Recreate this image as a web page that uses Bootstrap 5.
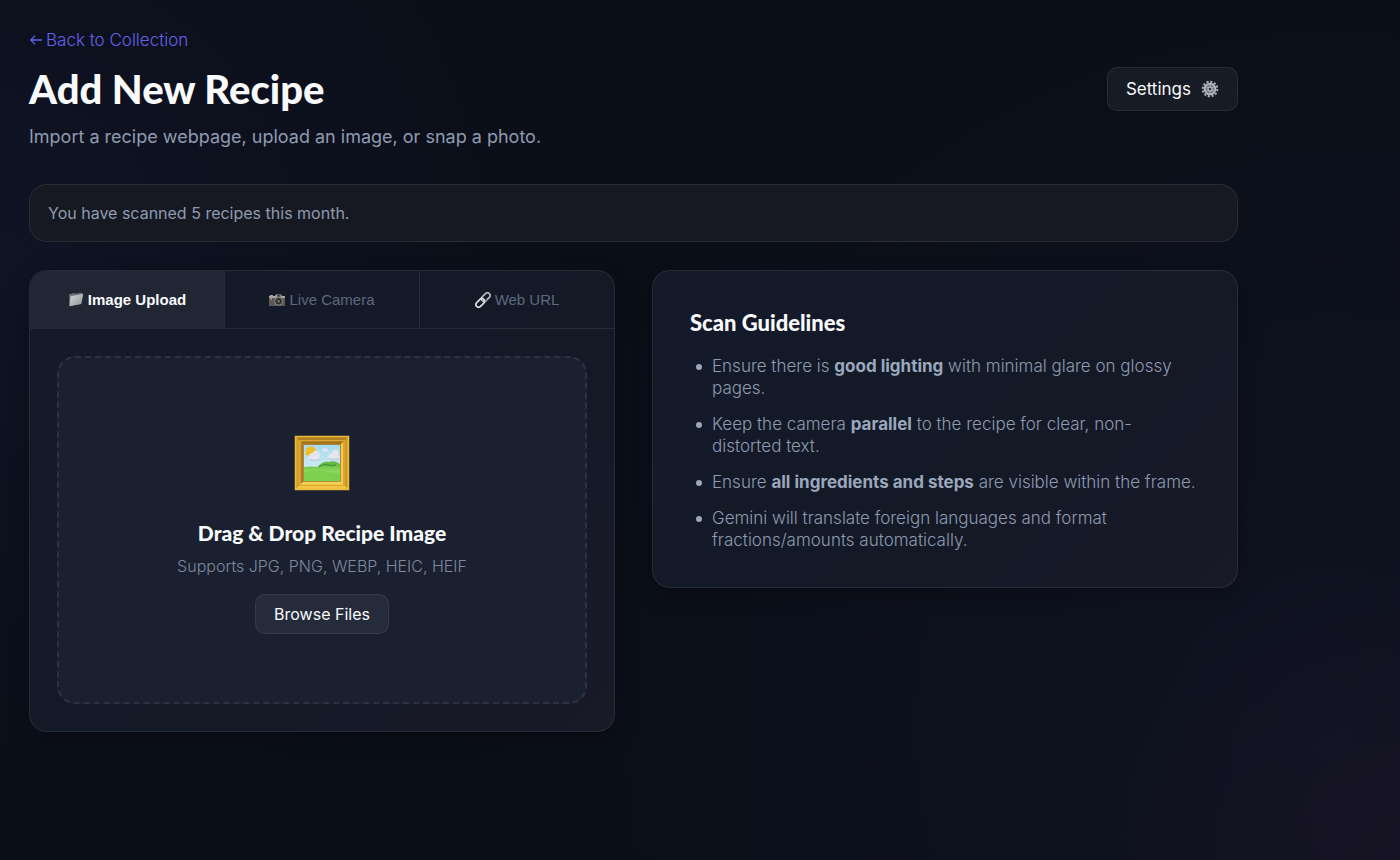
<!DOCTYPE html>
<html lang="en" data-bs-theme="dark">
<head>
<meta charset="utf-8">
<meta name="viewport" content="width=device-width, initial-scale=1">
<title>Add New Recipe</title>
<link href="https://cdn.jsdelivr.net/npm/bootstrap@5.3.0/dist/css/bootstrap.min.css" rel="stylesheet">
<style>
  :root {
    --ink: #f8fafc;
    --muted: #8f9bb0;
    --line: rgba(255, 255, 255, .08);
  }
  body {
    min-height: 100vh;
    font-family: "Inter", sans-serif;
    font-size: 17px;
    line-height: 22px;
    color: var(--muted);
    background:
      radial-gradient(circle at 100% 100%, rgba(236, 72, 153, .04), transparent 18%),
      radial-gradient(circle at 0 30%, rgba(99, 102, 241, .06), transparent 40%),
      radial-gradient(circle at 95% 85%, rgba(99, 92, 200, .06), transparent 60%),
      #0a0e17;
    background-attachment: fixed;
  }
  .page { max-width: 1267px; padding: 28px 29px; }
  .back-link { color: #6361e8; font-size: 17px; line-height: 24px; font-weight: 300; width: fit-content; }
  h1, h2, h3 { color: var(--ink); font-family: "Lato", sans-serif; margin: 0; }
  h1 { font-size: 40px; line-height: 48px; font-weight: 900; margin-top: 13px; }
  h2 { font-size: 22px; line-height: 28px; font-weight: 900; }
  h3 { font-size: 21px; line-height: 28px; font-weight: 900; }
  .lede { font-size: 18px; line-height: 24px; font-weight: 400; margin: 12px 0 0; }
  .page-head { margin-bottom: 35px; }
  .soft-btn {
    --bs-btn-color: var(--ink);
    --bs-btn-bg: rgba(255, 255, 255, .05);
    --bs-btn-border-color: var(--line);
    --bs-btn-hover-color: #fff;
    --bs-btn-hover-bg: rgba(255, 255, 255, .1);
    --bs-btn-hover-border-color: var(--line);
    --bs-btn-border-radius: 10px;
    --bs-btn-padding-x: 18px;
    --bs-btn-padding-y: 8px;
    --bs-btn-font-size: 16px;
    line-height: 22px;
  }
  .settings-btn { --bs-btn-padding-y: 10px; --bs-btn-font-size: 17px; gap: 10px; }
  .usage-note {
    padding: 17px 18px; font-size: 16px; font-weight: 400;
    background: #161922; border: 1px solid var(--line); border-radius: 18px;
    margin-bottom: 28px;
  }
  .panels { --bs-gutter-x: 37px; }
  .panel {
    background: linear-gradient(135deg, #141a2a, #131926 50%, #191928);
    border: 1px solid var(--line); border-radius: 18px;
    box-shadow: 0 6px 20px rgba(0, 0, 0, .25);
  }
  .source-tabs { border-bottom: 1px solid var(--line); }
  .source-tabs .nav-link {
    height: 57px; padding: 0; border: 0; border-radius: 0; background: transparent;
    font: 400 15px/22px "Liberation Sans", Arial, sans-serif;
    color: #5d697e;
  }
  .source-tabs .nav-item + .nav-item { border-left: 1px solid var(--line); }
  .source-tabs .nav-link.active { color: var(--ink); font-weight: 700; background: #212634; }
  .drop-wrap { padding: 27px; }
  .dropzone {
    padding: 77px 16px 68px;
    background: #1a2030; border: 2px dashed #2c3240; border-radius: 18px;
  }
  .dropzone h3 { margin-top: 28px; }
  .formats { font-size: 16px; font-weight: 300; color: #7d899e; margin: 8px 0 17px; }
  .guide { padding: 38px 37px 36px; }
  .guide ul { margin: 18px 0 0; padding-left: 22px; font-weight: 300; }
  .guide li + li { margin-top: 14px; }
  .guide li::before {
    content: ""; display: inline-block; vertical-align: middle;
    width: 6px; height: 6px; margin: 0 10px 0 -16px;
    border-radius: 50%; background: #9aa7bd;
  }
  .guide strong { font-weight: 700; color: #9aa7bd; }
</style>
</head>
<body>
<main class="page">
  <header class="page-head d-flex justify-content-between align-items-center gap-3">
    <div>
      <a href="#" class="back-link d-flex align-items-center text-decoration-none">
        <svg width="17" height="16" viewBox="0 0 17 16" fill="none" stroke="currentColor" stroke-width="1.3" aria-hidden="true"><path d="M13 8H2M6.2 3.6 1.8 8l4.4 4.4"/></svg>Back to Collection</a>
      <h1>Add New Recipe</h1>
      <p class="lede">Import a recipe webpage, upload an image, or snap a photo.</p>
    </div>
    <button type="button" class="btn soft-btn settings-btn d-flex align-items-center flex-shrink-0">Settings
      <svg width="18" height="18" viewBox="0 0 18 18" aria-hidden="true">
        <circle cx="9" cy="9" r="7.3" fill="none" stroke="#a7adb5" stroke-width="2" stroke-dasharray="2.2 1.62"/>
        <circle cx="9" cy="9" r="5.4" fill="#70767f" stroke="#b4bac2" stroke-width="1.8"/>
        <path d="M9 4v10M4.6 6.5l8.8 5M4.6 11.5l8.8-5" stroke="#a5abb3" stroke-width="1"/>
        <circle cx="9" cy="9" r="2" fill="#30353d" stroke="#d0d4d9" stroke-width="1"/>
      </svg>
    </button>
  </header>

  <div class="usage-note" role="status">You have scanned 5 recipes this month.</div>

  <div class="row panels gy-4 align-items-start">
    <div class="col-12 col-md-6">
      <section class="panel overflow-hidden">
        <ul class="nav nav-fill nav-justified source-tabs" role="tablist">
          <li class="nav-item" role="presentation"><button type="button" role="tab" aria-selected="true" class="nav-link active d-flex align-items-center justify-content-center gap-1">
            <svg width="16" height="16" viewBox="0 0 16 16" aria-hidden="true"><defs><linearGradient id="folder" x1="0" y1="0" x2="1" y2="1"><stop stop-color="#d5d8da"/><stop offset="1" stop-color="#8e9497"/></linearGradient></defs><path d="M1 2.6 6 .9l1 .8 7-1 .6 1.6L13 12 1.6 14Z" fill="#6f7679"/><path d="M2.6 4.2 15.2 2 13.3 12 1.4 14.3Z" fill="url(#folder)"/></svg>Image Upload</button></li>
          <li class="nav-item" role="presentation"><button type="button" role="tab" aria-selected="false" class="nav-link d-flex align-items-center justify-content-center gap-1">
            <svg width="16" height="14" viewBox="0 0 16 14" aria-hidden="true"><path d="M0 3h1V2h3v1h2l1-1.5h5L13 3h3v10H0Z" fill="#5a5955"/><path d="M0 3h1V2h3v1h2l1-1.5h5L13 3h3v2H0Z" fill="#a9a69e"/><path d="M8 1.8h3.5v2H8Z" fill="#3c3b39"/><circle cx="9.7" cy="8.3" r="4" fill="#3a3a39" stroke="#8d8b86"/><circle cx="9.7" cy="8.3" r="2" fill="#6c6d70" stroke="#222"/><path d="M1 5.5h2v1H1Z" fill="#c9b56c"/></svg>Live Camera</button></li>
          <li class="nav-item" role="presentation"><button type="button" role="tab" aria-selected="false" class="nav-link d-flex align-items-center justify-content-center gap-1">
            <svg width="16" height="16" viewBox="0 0 16 16" fill="none" aria-hidden="true"><g transform="rotate(-45 8 8)" stroke-width="1.6"><rect x="7" y="5.2" width="10" height="5.4" rx="2.7" stroke="#b7bcc0"/><rect x="-1" y="5.4" width="10" height="5.4" rx="2.7" stroke="#dfe2e4"/><path d="M8.8 10.5h2.8" stroke="#8a9095"/></g></svg>Web URL</button></li>
        </ul>
        <div class="drop-wrap">
          <div class="dropzone text-center">
            <svg class="d-block mx-auto" width="56" height="56" viewBox="0 0 56 56" aria-hidden="true">
              <defs>
                <linearGradient id="sky" x1="0" y1="0" x2="0" y2="1"><stop stop-color="#a5d8ee"/><stop offset="1" stop-color="#e6f4f5"/></linearGradient>
                <linearGradient id="hill" x1="0" y1="0" x2="0" y2="1"><stop stop-color="#5fb23c"/><stop offset=".5" stop-color="#8ad95c"/><stop offset="1" stop-color="#69c53f"/></linearGradient>
              </defs>
              <path d="M1 1h54v54H1Z" fill="#dfa62a"/>
              <path d="M1 1h54l-9 9H10Z" fill="#b5821f"/>
              <path d="M1 1v54l9-9V10Z" fill="#d3a02f"/>
              <path d="M1 55h54l-9-9H10Z" fill="#f3c544"/>
              <path d="M1.5 1.5h53v53h-53Z" fill="none" stroke="#e9b93a" stroke-width="1.5"/>
              <path d="M4 4h48v48" fill="none" stroke="#a87a20" stroke-width=".6"/>
              <path d="M5.5 5.5h45v45h-45Z" fill="none" stroke="#dca633" stroke-width="1.2"/>
              <path d="M8 48h40V8" fill="none" stroke="#f8d75c" stroke-width="1.5"/>
              <path d="M8 48V8h40" fill="none" stroke="#8c651b" stroke-width="1.2"/>
              <path d="M9.5 9.5h37v37h-37Z" fill="url(#sky)" stroke="#a47b26" stroke-width=".8"/>
              <path d="m15 11 2 1 2-1 1 2 2 1-1 2 1 2-2 1-1 2-2-1-2 2-1-2-3 0 1-2-1-2 2-1-1-2 2 0Z" fill="#f2bd23"/>
              <g fill="#e4e6ef"><ellipse cx="20" cy="23" rx="6" ry="2.6"/><circle cx="18" cy="21" r="2.8"/><circle cx="22" cy="19.5" r="3.8"/><ellipse cx="40" cy="22" rx="6" ry="2.6"/><circle cx="41.5" cy="18" r="3.2"/><circle cx="37.5" cy="20.5" r="2.4"/><ellipse cx="31" cy="15" rx="3" ry="1.7"/></g>
              <path d="M16 24.5q5 2 10-.5M35 23.5q5 2 10 0" fill="none" stroke="#bfc4da"/>
              <path d="M10 32q7-1 13 0 6-6 12-5 6-2 11 2v17H10Z" fill="url(#hill)"/>
              <path d="M25 31.5q5-2.5 9-1.5t8 0" fill="none" stroke="#459c38" stroke-width="1.3"/>
              <path d="M10 38q14-6 36 3v5H10Z" fill="#7bd14d"/>
            </svg>
            <h3>Drag &amp; Drop Recipe Image</h3>
            <p class="formats">Supports JPG, PNG, WEBP, HEIC, HEIF</p>
            <button type="button" class="btn soft-btn">Browse Files</button>
          </div>
        </div>
      </section>
    </div>
    <div class="col-12 col-md-6">
      <section class="panel guide">
        <h2>Scan Guidelines</h2>
        <ul class="list-unstyled">
          <li>Ensure there is <strong>good lighting</strong> with minimal glare on glossy pages.</li>
          <li>Keep the camera <strong>parallel</strong> to the recipe for clear, non-distorted text.</li>
          <li>Ensure <strong>all ingredients and steps</strong> are visible within the frame.</li>
          <li>Gemini will translate foreign languages and format fractions/amounts automatically.</li>
        </ul>
      </section>
    </div>
  </div>
</main>
<script src="https://cdn.jsdelivr.net/npm/bootstrap@5.3.0/dist/js/bootstrap.bundle.min.js"></script>
</body>
</html>
